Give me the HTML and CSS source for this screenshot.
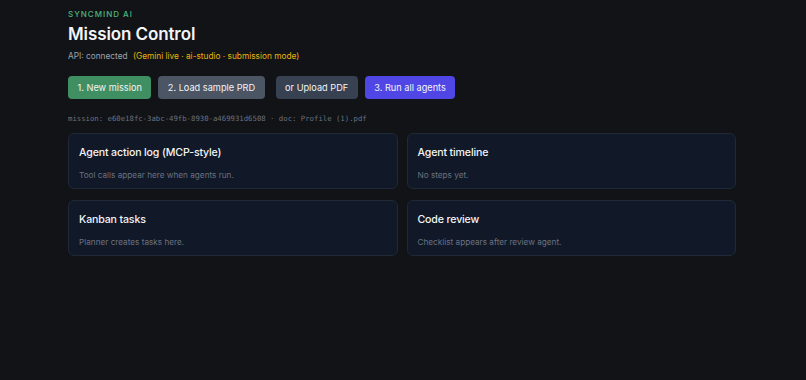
FILE: index.html
```html
<!DOCTYPE html>
<html lang="en">
<head>
  <meta charset="UTF-8">
  <meta name="viewport" content="width=device-width, initial-scale=1.0">
  <title>SyncMind AI - Mission Control</title>
  <link rel="stylesheet" href="styles.css">
</head>
<body>
  <div id="app">
    <header class="header">
      <div class="brand">SyncMind AI</div>
      <h1>Mission Control</h1>
      <p class="status">API: connected <span class="mode">(Gemini live · ai-studio · submission mode)</span></p>
    </header>

    <div class="actions">
      <button class="btn btn-green">1. New mission</button>
      <button class="btn btn-gray">2. Load sample PRD</button>
      <button class="btn btn-dark">or Upload PDF</button>
      <button class="btn btn-indigo">3. Run all agents</button>
    </div>

    <p class="meta">mission: e60e18fc-3abc-49fb-8930-a469931d6508 · doc: Profile (1).pdf</p>

    <div class="panels">
      <section class="panel">
        <h2>Agent action log (MCP-style)</h2>
        <p>Tool calls appear here when agents run.</p>
      </section>
      <section class="panel">
        <h2>Agent timeline</h2>
        <p>No steps yet.</p>
      </section>
      <section class="panel">
        <h2>Kanban tasks</h2>
        <p>Planner creates tasks here.</p>
      </section>
      <section class="panel">
        <h2>Code review</h2>
        <p>Checklist appears after review agent.</p>
      </section>
    </div>
  </div>
</body>
</html>
```

FILE: styles.css
```css
body {
  margin: 0;
  padding: 0;
  background: #111317;
  color: #e5e7eb;
  font-family: Inter, "Noto Sans", Arial, sans-serif;
}

#app {
  width: 668px;
  margin: 0 0 0 68px;
  padding-top: 9px;
}

.brand {
  font-size: 8px;
  font-weight: 500;
  letter-spacing: 1px;
  text-transform: uppercase;
  color: #4fb57c;
  line-height: 11px;
}

h1 {
  margin: 3px 0 0;
  font-size: 17px;
  font-weight: 600;
  letter-spacing: -0.1px;
  line-height: 22px;
  color: #f3f4f6;
}

.status {
  margin: 6px 0 0;
  font-size: 8.3px;
  line-height: 11px;
  color: #9ca3af;
}

.mode {
  margin-left: 3px;
  color: #eab308;
}

.actions {
  display: flex;
  gap: 7px;
  margin-top: 14px;
}

.btn {
  height: 23px;
  padding: 0 9.5px;
  border: none;
  border-radius: 4px;
  font-family: inherit;
  font-size: 9.2px;
  color: #f3f4f6;
  cursor: pointer;
}

.btn-green { background: #3f8f63; }
.btn-gray { background: #4b5563; }
.btn-dark { background: #374151; margin-left: 4px; }
.btn-indigo { background: #4f46e5; }

.meta {
  margin: 15px 0 0;
  font-family: "DejaVu Sans Mono", "Liberation Mono", monospace;
  font-size: 7.3px;
  line-height: 10px;
  color: #6b7280;
}

.panels {
  display: grid;
  grid-template-columns: 1fr 1fr;
  column-gap: 9px;
  row-gap: 11px;
  margin-top: 9px;
}

.panel {
  height: 56px;
  box-sizing: border-box;
  padding: 11px 10px 0;
  background: #111827;
  border: 1px solid #1f2937;
  border-radius: 6px;
}

.panel h2 {
  margin: 0;
  font-size: 10.6px;
  font-weight: 500;
  letter-spacing: -0.15px;
  line-height: 15px;
  color: #f3f4f6;
}

.panel p {
  margin: 10px 0 0;
  font-size: 8.2px;
  line-height: 11px;
  color: #6b7280;
}
```
